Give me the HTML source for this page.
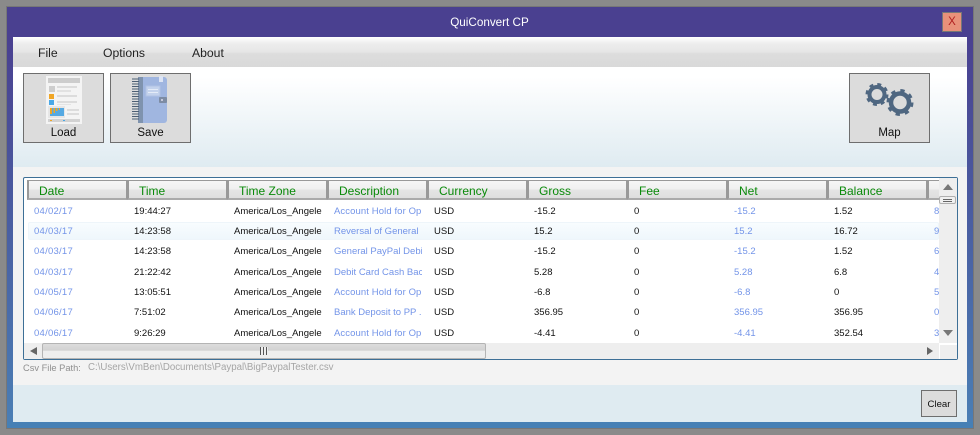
<!DOCTYPE html>
<html><head><meta charset="utf-8"><style>
*{box-sizing:border-box}
html,body{margin:0;padding:0;width:980px;height:435px;overflow:hidden;background:#8a8a8a;font-family:"Liberation Sans",sans-serif}
div,span,svg{position:absolute}
.b{background:#dcdcdc;border:1px solid #6e6e6e;text-align:center;font-size:11.5px;color:#111}
.b span{left:0;right:0;white-space:nowrap}
.m{font-size:12.2px;color:#222;top:46px}
.h{top:180px;height:20px;width:100px;border:1px solid #999;border-width:1px 1px 2px 2px;border-bottom-color:#aaa;background:linear-gradient(#f6f6f6 0,#f0f0f0 45%,#e4e4e4 55%,#dedede 100%);color:#0a8a0a;font-size:12px;line-height:20px;padding-left:10px;white-space:nowrap}
.c{font-size:9.5px;line-height:12px;margin-top:1px;white-space:nowrap;overflow:hidden;color:#111}
.l{color:#7394e8}
</style></head><body>
<div style="left:6px;top:6px;width:968px;height:423px;background:#4a4090;border:1px solid #777"></div>
<div style="left:7px;top:37px;width:6px;height:391px;background:linear-gradient(#4a4090,#4a7fb5)"></div>
<div style="left:967px;top:37px;width:6px;height:391px;background:linear-gradient(#4a4090,#4a7fb5)"></div>
<div style="left:7px;top:422px;width:966px;height:6px;background:#4680b5"></div>
<div style="left:0;right:1px;top:15px;text-align:center;color:#fff;font-size:11.7px;line-height:16px">QuiConvert CP</div>
<div style="left:942px;top:12px;width:20px;height:20px;background:#e8917a;border:1px solid #777;color:#b02020;font-size:11.5px;line-height:19px;text-align:center">X</div>

<div style="left:13px;top:37px;width:954px;height:385px;background:#dfebf1"></div>
<div style="left:13px;top:37px;width:954px;height:30px;background:linear-gradient(#fff 0,#ededed 22%,#e6e6e6 50%,#dddddd 56%,#d9d9d9 100%)"></div>
<div style="left:13px;top:67px;width:954px;height:100px;background:linear-gradient(#fff 0,#fff 10%,#dfebf1 100%)"></div>
<div class="m" style="left:38px">File</div>
<div class="m" style="left:103px">Options</div>
<div class="m" style="left:192px">About</div>

<div class="b" style="left:23px;top:73px;width:81px;height:70px"><span style="top:53px">Load</span></div>
<svg style="left:45px;top:76px;filter:blur(.35px)" width="38" height="48" viewBox="0 0 38 48">
<rect x="1" y="0" width="36" height="48" fill="#f4f4f4"/>
<rect x="3" y="2" width="32" height="5" fill="#cdcdcd"/>
<rect x="4" y="10" width="6" height="6" fill="#cdcdcd"/>
<rect x="12" y="10" width="20" height="2" fill="#dcdcdc"/><rect x="12" y="14" width="14" height="2" fill="#e2e2e2"/>
<rect x="4" y="18" width="5" height="5" fill="#f0a626"/><rect x="4" y="24" width="5" height="5" fill="#4aa8e6"/>
<rect x="12" y="19" width="20" height="2" fill="#dcdcdc"/><rect x="12" y="25" width="20" height="2" fill="#dcdcdc"/><rect x="12" y="28" width="14" height="1" fill="#e4e4e4"/>
<rect x="3" y="30" width="17" height="12" fill="#e6e6e6"/>
<path d="M5 40h14v-8H5z" fill="#55a9e2"/>
<path d="M5 32h2v6H5zM8.500 32h1.500v5H8.500zM11 32h1.500v3H11zM14 32h1v2h-1z" fill="#f0a626"/>
<rect x="22" y="33" width="12" height="2" fill="#dcdcdc"/><rect x="22" y="37" width="12" height="2" fill="#dcdcdc"/>
<rect x="3" y="43" width="32" height="3" fill="#d2d2d2"/><rect x="5" y="44" width="2" height="1" fill="#f0a626"/><rect x="18" y="44" width="2" height="1" fill="#4aa8e6"/>
</svg>

<div class="b" style="left:110px;top:73px;width:81px;height:70px"><span style="top:53px">Save</span></div>
<svg style="left:130px;top:76px;filter:blur(.3px)" width="38" height="48" viewBox="0 0 38 48">
<rect x="8" y="1" width="5" height="46" fill="#7f93ae"/>
<path d="M13 1h21a3 3 0 0 1 3 3v40a3 3 0 0 1-3 3H13z" fill="#a0b6e0"/>
<rect x="16" y="10" width="14" height="10" fill="#c3d2ec" stroke="#b0c2e4"/>
<rect x="18" y="13" width="10" height="1" fill="#e4ebf7"/><rect x="18" y="16" width="10" height="1" fill="#e4ebf7"/>
<rect x="29" y="0" width="4" height="6" fill="#dce4f4"/>
<rect x="29" y="21" width="8" height="6" rx="1" fill="#7d8ca4"/><circle cx="32" cy="24" r="1" fill="#dde"/>
<path d="M2 3h7M2 5.500h7M2 8h7M2 10.500h7M2 13h7M2 15.500h7M2 18h7M2 20.500h7M2 23h7M2 25.500h7M2 28h7M2 30.500h7M2 33h7M2 35.500h7M2 38h7M2 40.500h7M2 43h7" stroke="#4d5f74" stroke-width="1"/>
</svg>

<div class="b" style="left:849px;top:73px;width:81px;height:70px"><span style="top:53px">Map</span></div>
<svg style="left:860px;top:80px" width="60" height="42" viewBox="0 0 60 42" fill="none" stroke="#4f6781">
<circle cx="17" cy="14.500" r="7.500" stroke-width="4"/>
<circle cx="17" cy="14.500" r="10" stroke-width="3" stroke-dasharray="3.900 3.950"/>
<circle cx="40" cy="22.500" r="9" stroke-width="4.500"/>
<circle cx="40" cy="22.500" r="12" stroke-width="3" stroke-dasharray="4.300 5.120"/>
</svg>

<div style="left:13px;top:167px;width:954px;height:218px;background:#f3f3f3"></div>
<div style="left:23px;top:177px;width:935px;height:183px;background:#fff;border:1px solid #3d6f96;border-radius:2px"></div>

<div class="h" style="left:27px">Date</div><div class="h" style="left:127px">Time</div><div class="h" style="left:227px">Time Zone</div><div class="h" style="left:327px">Description</div><div class="h" style="left:427px">Currency</div><div class="h" style="left:527px">Gross</div><div class="h" style="left:627px">Fee</div><div class="h" style="left:727px">Net</div><div class="h" style="left:827px">Balance</div><div class="h" style="left:927px;width:12px"></div>

<div style="left:28px;top:222px;width:911px;height:18px;background:linear-gradient(#f8fcfe,#eff7fc);border:1px solid #eef5fa;border-radius:2px"></div>

<div class="c l" style="left:34px;top:205px;letter-spacing:.25px">04/02/17</div><div class="c" style="left:134px;top:205px">19:44:27</div><div class="c" style="left:234px;top:205px;width:88px">America/Los_Angele</div><div class="c l" style="left:334px;top:205px;width:88px;letter-spacing:.1px">Account Hold for Op</div><div class="c" style="left:434px;top:205px">USD</div><div class="c" style="left:534px;top:205px">-15.2</div><div class="c" style="left:634px;top:205px">0</div><div class="c l" style="left:734px;top:205px">-15.2</div><div class="c" style="left:834px;top:205px">1.52</div><div class="c l" style="left:934px;top:205px;width:5px">8</div>

<div class="c l" style="left:34px;top:225px;letter-spacing:.25px">04/03/17</div><div class="c" style="left:134px;top:225px">14:23:58</div><div class="c" style="left:234px;top:225px;width:88px">America/Los_Angele</div><div class="c l" style="left:334px;top:225px;width:88px">Reversal of General</div><div class="c" style="left:434px;top:225px">USD</div><div class="c" style="left:534px;top:225px">15.2</div><div class="c" style="left:634px;top:225px">0</div><div class="c l" style="left:734px;top:225px">15.2</div><div class="c" style="left:834px;top:225px">16.72</div><div class="c l" style="left:934px;top:225px;width:5px">9</div>

<div class="c l" style="left:34px;top:245px;letter-spacing:.25px">04/03/17</div><div class="c" style="left:134px;top:245px">14:23:58</div><div class="c" style="left:234px;top:245px;width:88px">America/Los_Angele</div><div class="c l" style="left:334px;top:245px;width:88px">General PayPal Debi</div><div class="c" style="left:434px;top:245px">USD</div><div class="c" style="left:534px;top:245px">-15.2</div><div class="c" style="left:634px;top:245px">0</div><div class="c l" style="left:734px;top:245px">-15.2</div><div class="c" style="left:834px;top:245px">1.52</div><div class="c l" style="left:934px;top:245px;width:5px">6</div>

<div class="c l" style="left:34px;top:266px;letter-spacing:.25px">04/03/17</div><div class="c" style="left:134px;top:266px">21:22:42</div><div class="c" style="left:234px;top:266px;width:88px">America/Los_Angele</div><div class="c l" style="left:334px;top:266px;width:88px">Debit Card Cash Bac</div><div class="c" style="left:434px;top:266px">USD</div><div class="c" style="left:534px;top:266px">5.28</div><div class="c" style="left:634px;top:266px">0</div><div class="c l" style="left:734px;top:266px">5.28</div><div class="c" style="left:834px;top:266px">6.8</div><div class="c l" style="left:934px;top:266px;width:5px">4</div>

<div class="c l" style="left:34px;top:286px;letter-spacing:.25px">04/05/17</div><div class="c" style="left:134px;top:286px">13:05:51</div><div class="c" style="left:234px;top:286px;width:88px">America/Los_Angele</div><div class="c l" style="left:334px;top:286px;width:88px;letter-spacing:.1px">Account Hold for Op</div><div class="c" style="left:434px;top:286px">USD</div><div class="c" style="left:534px;top:286px">-6.8</div><div class="c" style="left:634px;top:286px">0</div><div class="c l" style="left:734px;top:286px">-6.8</div><div class="c" style="left:834px;top:286px">0</div><div class="c l" style="left:934px;top:286px;width:5px">5</div>

<div class="c l" style="left:34px;top:306px;letter-spacing:.25px">04/06/17</div><div class="c" style="left:134px;top:306px">7:51:02</div><div class="c" style="left:234px;top:306px;width:88px">America/Los_Angele</div><div class="c l" style="left:334px;top:306px;width:88px">Bank Deposit to PP .</div><div class="c" style="left:434px;top:306px">USD</div><div class="c" style="left:534px;top:306px">356.95</div><div class="c" style="left:634px;top:306px">0</div><div class="c l" style="left:734px;top:306px">356.95</div><div class="c" style="left:834px;top:306px">356.95</div><div class="c l" style="left:934px;top:306px;width:5px">0</div>

<div class="c l" style="left:34px;top:327px;letter-spacing:.25px">04/06/17</div><div class="c" style="left:134px;top:327px">9:26:29</div><div class="c" style="left:234px;top:327px;width:88px">America/Los_Angele</div><div class="c l" style="left:334px;top:327px;width:88px;letter-spacing:.1px">Account Hold for Op</div><div class="c" style="left:434px;top:327px">USD</div><div class="c" style="left:534px;top:327px">-4.41</div><div class="c" style="left:634px;top:327px">0</div><div class="c l" style="left:734px;top:327px">-4.41</div><div class="c" style="left:834px;top:327px">352.54</div><div class="c l" style="left:934px;top:327px;width:5px">3</div>

<div style="left:939px;top:178px;width:18px;height:165px;background:#eeeeee"></div>
<div style="left:939px;top:196px;width:17px;height:8px;background:#f0f0f0;border:1px solid #b0b0b0;border-radius:2px"></div>
<div style="left:943px;top:199px;width:9px;height:3px;border-top:1px solid #666;border-bottom:1px solid #666"></div>
<svg style="left:940px;top:183px" width="15" height="160"><path d="M3 7L8 1L13 7z" fill="#777"/><path d="M3 147h10L8 153z" fill="#777"/></svg>

<div style="left:24px;top:343px;width:915px;height:16px;background:#eeeeee"></div>
<div style="left:939px;top:344px;width:18px;height:15px;background:#eeeeee;border-left:1px solid #fff;border-top:1px solid #fff"></div>
<div style="left:42px;top:343px;width:444px;height:16px;background:linear-gradient(#dcdcdc 0,#d2d2d2 45%,#eeeeee 50%,#eeeeee 100%);border:1px solid #b4b4b4;border-radius:2px"></div>
<div style="left:260px;top:347px;width:8px;height:8px;background:repeating-linear-gradient(90deg,#555 0,#555 1px,#eee 1px,#eee 3px)"></div>
<svg style="left:28px;top:344px" width="910" height="14"><path d="M9 3v8L2 7z" fill="#666"/><path d="M899 3v8l6-4z" fill="#666"/></svg>

<div style="left:23px;top:361px;margin-top:1px;font-size:9.3px;line-height:12px;color:#8f8f8f;white-space:nowrap">Csv File Path:</div>
<div style="left:88px;top:361px;margin-top:1px;font-size:9.7px;line-height:12px;color:#a5a5a5;white-space:nowrap">C:\Users\VmBen\Documents\Paypal\BigPaypalTester.csv</div>

<div class="b" style="left:921px;top:390px;width:36px;height:27px;font-size:9.6px;line-height:27px">Clear</div>
</body></html>
